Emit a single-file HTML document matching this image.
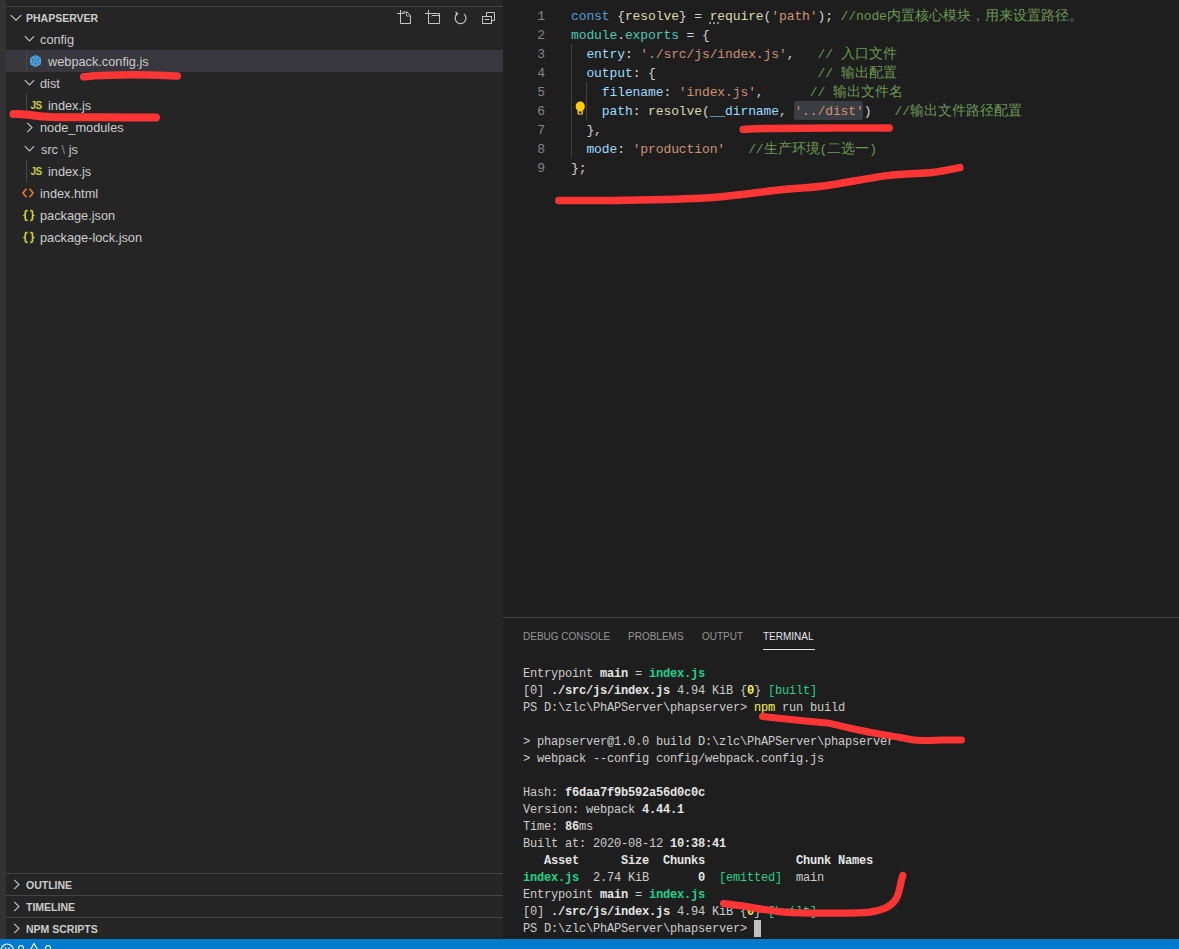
<!DOCTYPE html>
<html><head><meta charset="utf-8">
<style>
*{margin:0;padding:0;box-sizing:border-box}
html,body{width:1179px;height:949px;overflow:hidden;background:#1e1e1e}
body{position:relative;font-family:"Liberation Sans",sans-serif}
.abs{position:absolute}
#act{left:0;top:0;width:6px;height:939px;background:#333333}
#side{left:6px;top:0;width:497px;height:939px;background:#252526}
.hline{position:absolute;height:1px;background:#444446}
.row{position:absolute;left:0;width:497px;height:22px;line-height:22px;font-size:12.75px;color:#cccccc;white-space:nowrap}
.row .t{position:absolute;top:1px}
.sec{position:absolute;left:0;width:497px;height:22px;line-height:22px;font-size:10.5px;font-weight:700;color:#cccccc;white-space:nowrap}
.sec .t{position:absolute;left:20px;top:1px}
svg{position:absolute;overflow:visible}
#editor{left:503px;top:0;width:676px;height:617px;background:#1e1e1e}
.ln{position:absolute;left:0;width:42px;text-align:right;font-family:"Liberation Mono",monospace;font-size:13px;letter-spacing:-0.1px;color:#858585;height:19px;line-height:19px}
.code{position:absolute;left:68px;font-family:"Liberation Mono",monospace;font-size:13px;letter-spacing:-0.1px;color:#d4d4d4;height:19px;line-height:19px;white-space:pre}
.kw{color:#569cd6}.fn{color:#dcdcaa}.str{color:#ce9178}.cm{color:#6a9955}.prop{color:#9cdcfe}.cls{color:#4ec9b0}.br{color:#d4d4d4}.pk{color:#d4d4d4}.bl{color:#d4d4d4}.hl{}.cj{font-size:13.5px;letter-spacing:0}
#panel{left:503px;top:617px;width:676px;height:322px;background:#1e1e1e;border-top:1px solid #414141}
.tab{position:absolute;top:10px;font-size:10px;color:#969696;line-height:18px;white-space:nowrap}
.term{position:absolute;left:20px;font-family:"Liberation Mono",monospace;font-size:12px;letter-spacing:-0.2px;color:#cccccc;height:17px;line-height:17px;white-space:pre}
.b{font-weight:700;color:#e5e5e5}.g{color:#23d18b}.y{color:#f5f543}
#status{left:0;top:939px;width:1179px;height:10px;background:#007acc}
</style></head><body>
<div id="act" class="abs"></div>
<div id="side" class="abs">
  <div class="hline" style="left:0;top:6px;width:497px"></div>
  <div class="sec" style="top:7px;height:21px;line-height:21px"><svg style="left:4px;top:7px" width="12" height="8" viewBox="0 0 12 8"><path d="M0.8 1.2 L6 6.2 L11.2 1.2" fill="none" stroke="#c5c5c5" stroke-width="1.1"/></svg><span class="t">PHAPSERVER</span></div>
  <svg style="left:391px;top:10px" width="16" height="16" viewBox="0 0 16 16"><path d="M0 3.5 H7.5 M3.5 0 V7" stroke="#c5c5c5" stroke-width="1" fill="none"/><path d="M3.5 7 V13.5 H13.5 V5.5 L10 2 H5.5" fill="none" stroke="#c5c5c5" stroke-width="1"/><path d="M9.5 2 V6 H13.5" fill="none" stroke="#c5c5c5" stroke-width="0.8"/></svg>
  <svg style="left:419px;top:10px" width="16" height="16" viewBox="0 0 16 16"><path d="M0 3.5 H7 M3.5 0 V7" stroke="#c5c5c5" stroke-width="1" fill="none"/><path d="M3.5 7 V13.5 H14.5 V3.5 H7" fill="none" stroke="#c5c5c5" stroke-width="1"/><path d="M6 6.5 L7 5.5 H14.5" fill="none" stroke="#c5c5c5" stroke-width="1"/></svg>
  <svg style="left:448px;top:12px" width="14" height="14" viewBox="0 0 14 14"><path d="M9.9 1.9 A5.4 5.4 0 1 1 3.2 1.9" fill="none" stroke="#c5c5c5" stroke-width="1.2"/><path d="M1.6 0 L3.6 2 L1.4 3.6" fill="none" stroke="#c5c5c5" stroke-width="1.2"/></svg>
  <svg style="left:476px;top:12px" width="14" height="14" viewBox="0 0 14 14"><path d="M4.5 4.5 V0.5 H12.5 V8.5 H9.5" fill="none" stroke="#c5c5c5" stroke-width="1"/><rect x="0.5" y="4.5" width="9" height="7" fill="none" stroke="#c5c5c5" stroke-width="1"/><path d="M2.5 7.5 H7.5" stroke="#c5c5c5" stroke-width="1"/></svg>

  <div class="row" style="top:28px"><svg style="left:18px;top:7px" width="12" height="8" viewBox="0 0 12 8"><path d="M0.8 1.2 L5.5 5.9 L10.2 1.2" fill="none" stroke="#c5c5c5" stroke-width="1.1"/></svg><span class="t" style="left:34px">config</span></div>
  <div class="row" style="top:50px;background:#37373d"><div class="abs" style="left:20px;top:0;width:1px;height:22px;background:#484848"></div>
    <svg style="left:23px;top:4px" width="13" height="14" viewBox="0 0 13 14"><path d="M6.5 0.8 L12 3.8 V10.2 L6.5 13.2 L1 10.2 V3.8 Z" fill="#55a5da"/><path d="M6.5 3.6 L9.4 5.2 V8.6 L6.5 10.2 L3.6 8.6 V5.2 Z M6.5 6.8 V10.2 M3.6 5.2 L6.5 6.8 L9.4 5.2 M6.5 0.8 V3.6 M12 3.8 L9.4 5.2 M1 3.8 L3.6 5.2 M1 10.2 L3.6 8.6 M12 10.2 L9.4 8.6 M6.5 13.2 V10.2" fill="none" stroke="#2b6f9e" stroke-width="0.7"/></svg>
    <span class="t" style="left:42px">webpack.config.js</span></div>
  <div class="row" style="top:72px"><svg style="left:18px;top:7px" width="12" height="8" viewBox="0 0 12 8"><path d="M0.8 1.2 L5.5 5.9 L10.2 1.2" fill="none" stroke="#c5c5c5" stroke-width="1.1"/></svg><span class="t" style="left:34px">dist</span></div>
  <div class="row" style="top:94px"><div class="abs" style="left:20px;top:0;width:1px;height:22px;background:#484848"></div><span class="abs" style="left:24.5px;top:0.5px;font-size:10px;font-weight:700;color:#cbcb41;letter-spacing:-0.5px">JS</span><span class="t" style="left:42px">index.js</span></div>
  <div class="row" style="top:116px"><svg style="left:20px;top:6px" width="8" height="12" viewBox="0 0 8 12"><path d="M1.2 0.8 L6 5.5 L1.2 10.2" fill="none" stroke="#c5c5c5" stroke-width="1.1"/></svg><span class="t" style="left:34px">node_modules</span></div>
  <div class="row" style="top:138px"><svg style="left:18px;top:7px" width="12" height="8" viewBox="0 0 12 8"><path d="M0.8 1.2 L5.5 5.9 L10.2 1.2" fill="none" stroke="#c5c5c5" stroke-width="1.1"/></svg><span class="t" style="left:35px">src <span style="color:#8a8a8a">\</span> js</span></div>
  <div class="row" style="top:160px"><div class="abs" style="left:20px;top:0;width:1px;height:22px;background:#484848"></div><span class="abs" style="left:24.5px;top:0.5px;font-size:10px;font-weight:700;color:#cbcb41;letter-spacing:-0.5px">JS</span><span class="t" style="left:42px">index.js</span></div>
  <div class="row" style="top:182px"><svg style="left:16px;top:6px" width="12" height="10" viewBox="0 0 12 10"><path d="M4.5 0.8 L0.9 5 L4.5 9.2 M7.5 0.8 L11.1 5 L7.5 9.2" fill="none" stroke="#e37933" stroke-width="1.6"/></svg><span class="t" style="left:34px">index.html</span></div>
  <div class="row" style="top:204px"><svg style="left:16.5px;top:5.5px" width="12" height="11" viewBox="0 0 12 11"><path d="M4.6 0.7 H3.6 Q2.3 0.7 2.3 2 V4.2 Q2.3 5.1 1.5 5.5 Q2.3 5.9 2.3 6.8 V9 Q2.3 10.3 3.6 10.3 H4.6 M7.2 0.7 H8.2 Q9.5 0.7 9.5 2 V4.2 Q9.5 5.1 10.3 5.5 Q9.5 5.9 9.5 6.8 V9 Q9.5 10.3 8.2 10.3 H7.2" fill="none" stroke="#cbcb41" stroke-width="1.7"/></svg><span class="t" style="left:34px">package.json</span></div>
  <div class="row" style="top:226px"><svg style="left:16.5px;top:5.5px" width="12" height="11" viewBox="0 0 12 11"><path d="M4.6 0.7 H3.6 Q2.3 0.7 2.3 2 V4.2 Q2.3 5.1 1.5 5.5 Q2.3 5.9 2.3 6.8 V9 Q2.3 10.3 3.6 10.3 H4.6 M7.2 0.7 H8.2 Q9.5 0.7 9.5 2 V4.2 Q9.5 5.1 10.3 5.5 Q9.5 5.9 9.5 6.8 V9 Q9.5 10.3 8.2 10.3 H7.2" fill="none" stroke="#cbcb41" stroke-width="1.7"/></svg><span class="t" style="left:34px">package-lock.json</span></div>

  <div class="hline" style="left:0;top:873px;width:497px"></div>
  <div class="sec" style="top:874px;height:21px;line-height:21px"><svg style="left:7px;top:5px" width="8" height="12" viewBox="0 0 8 12"><path d="M1.2 0.8 L6 5.5 L1.2 10.2" fill="none" stroke="#c5c5c5" stroke-width="1.1"/></svg><span class="t">OUTLINE</span></div>
  <div class="hline" style="left:0;top:895px;width:497px"></div>
  <div class="sec" style="top:896px;height:21px;line-height:21px"><svg style="left:7px;top:5px" width="8" height="12" viewBox="0 0 8 12"><path d="M1.2 0.8 L6 5.5 L1.2 10.2" fill="none" stroke="#c5c5c5" stroke-width="1.1"/></svg><span class="t">TIMELINE</span></div>
  <div class="hline" style="left:0;top:917px;width:497px"></div>
  <div class="sec" style="top:918px;height:21px;line-height:21px"><svg style="left:7px;top:5px" width="8" height="12" viewBox="0 0 8 12"><path d="M1.2 0.8 L6 5.5 L1.2 10.2" fill="none" stroke="#c5c5c5" stroke-width="1.1"/></svg><span class="t">NPM SCRIPTS</span></div>
</div>
<div id="editor" class="abs">
  <div class="abs" style="left:291px;top:101px;width:69px;height:19px;background:#3a3d41;border-radius:3px"></div>
  <div class="ln" style="top:calc(6px + 1px)">1</div>
  <div class="code" style="top:calc(6px + 1px)"><span class="kw">const</span> <span class="br">{</span><span class="fn">resolve</span><span class="br">}</span> = <span class="fn">require</span><span class="br">(</span><span class="str">'path'</span><span class="br">)</span>; <span class="cm">//node<span class="cj">内置核心模块，用来设置路径。</span></span></div>
  <div class="ln" style="top:calc(25px + 1px)">2</div>
  <div class="code" style="top:calc(25px + 1px)"><span class="cls">module</span>.<span class="cls">exports</span> = <span class="br">{</span></div>
  <div class="ln" style="top:calc(44px + 1px)">3</div>
  <div class="code" style="top:calc(44px + 1px)">  <span class="prop">entry</span>: <span class="str">'./src/js/index.js'</span>,   <span class="cm">// <span class="cj">入口文件</span></span></div>
  <div class="ln" style="top:calc(63px + 1px)">4</div>
  <div class="code" style="top:calc(63px + 1px)">  <span class="prop">output</span>: <span class="pk">{</span>                     <span class="cm">// <span class="cj">输出配置</span></span></div>
  <div class="ln" style="top:calc(82px + 1px)">5</div>
  <div class="code" style="top:calc(82px + 1px)">    <span class="prop">filename</span>: <span class="str">'index.js'</span>,      <span class="cm">// <span class="cj">输出文件名</span></span></div>
  <div class="ln" style="top:calc(101px + 1px)">6</div>
  <div class="code" style="top:calc(101px + 1px)">    <span class="prop">path</span>: <span class="fn">resolve</span><span class="bl">(</span><span class="prop">__dirname</span>, <span class="str hl">'../dist'</span><span class="bl">)</span>   <span class="cm">//<span class="cj">输出文件路径配置</span></span></div>
  <div class="ln" style="top:calc(120px + 1px)">7</div>
  <div class="code" style="top:calc(120px + 1px)">  <span class="pk">}</span>,</div>
  <div class="ln" style="top:calc(139px + 1px)">8</div>
  <div class="code" style="top:calc(139px + 1px)">  <span class="prop">mode</span>: <span class="str">'production'</span>   <span class="cm">//<span class="cj">生产环境</span>(<span class="cj">二选一</span>)</span></div>
  <div class="ln" style="top:calc(158px + 1px)">9</div>
  <div class="code" style="top:calc(158px + 1px)"><span class="br">}</span>;</div>
  <div class="abs" style="left:206px;top:22px;width:12px;height:2px;background:repeating-linear-gradient(90deg,#8a8a8a 0 2px,transparent 2px 4px)"></div>
  <div class="abs" style="left:68px;top:44px;width:1px;height:114px;background:#404040"></div>
  <div class="abs" style="left:83px;top:82px;width:1px;height:38px;background:#404040"></div>
  <svg style="left:71.5px;top:101px" width="10.5" height="14" viewBox="0 0 12 14" preserveAspectRatio="none"><path d="M6 0.5 C2.8 0.5 0.8 2.8 0.8 5.4 C0.8 7.4 2.2 8.6 3 9.6 V13.5 H9 V9.6 C9.8 8.6 11.2 7.4 11.2 5.4 C11.2 2.8 9.2 0.5 6 0.5Z" fill="#ffcc00"/><rect x="4.5" y="10.5" width="3" height="2" fill="#1e1e1e"/></svg>
</div>
<div id="panel" class="abs">
  <div class="tab" style="left:20px">DEBUG CONSOLE</div>
  <div class="tab" style="left:125px">PROBLEMS</div>
  <div class="tab" style="left:199px">OUTPUT</div>
  <div class="tab" style="left:260px;color:#e7e7e7">TERMINAL</div>
  <div class="abs" style="left:260px;top:31px;width:52px;height:1px;background:#e7e7e7"></div>
  <div class="term" style="top:48px">Entrypoint <span class="b">main</span> = <span class="b g">index.js</span></div>
  <div class="term" style="top:65px">[0] <span class="b">./src/js/index.js</span> 4.94 KiB {<span class="b y">0</span>} <span class="g">[built]</span></div>
  <div class="term" style="top:82px">PS D:\zlc\PhAPServer\phapserver&gt; <span class="y">npm</span> run build</div>
  <div class="term" style="top:99px"></div>
  <div class="term" style="top:116px">&gt; phapserver@1.0.0 build D:\zlc\PhAPServer\phapserver</div>
  <div class="term" style="top:133px">&gt; webpack --config config/webpack.config.js</div>
  <div class="term" style="top:150px"></div>
  <div class="term" style="top:167px">Hash: <span class="b">f6daa7f9b592a56d0c0c</span></div>
  <div class="term" style="top:184px">Version: webpack <span class="b">4.44.1</span></div>
  <div class="term" style="top:201px">Time: <span class="b">86</span>ms</div>
  <div class="term" style="top:218px">Built at: 2020-08-12 <span class="b">10:38:41</span></div>
  <div class="term" style="top:235px"><span class="b">   Asset      Size  Chunks             Chunk Names</span></div>
  <div class="term" style="top:252px"><span class="b g">index.js</span>  2.74 KiB       <span class="b">0</span>  <span class="g">[emitted]</span>  main</div>
  <div class="term" style="top:269px">Entrypoint <span class="b">main</span> = <span class="b g">index.js</span></div>
  <div class="term" style="top:286px">[0] <span class="b">./src/js/index.js</span> 4.94 KiB {<span class="b y">0</span>} <span class="g">[built]</span></div>
  <div class="term" style="top:303px">PS D:\zlc\PhAPServer\phapserver&gt; </div>
  <div class="abs" style="left:251px;top:302px;width:7px;height:17px;background:#c0c0c0"></div>
</div>
<div id="status" class="abs" style="overflow:hidden"><svg style="left:0;top:0" width="80" height="10" viewBox="0 0 80 10"><circle cx="7.2" cy="11" r="6" fill="none" stroke="#ffffff" stroke-width="1.1"/><path d="M4.8 8.6 L9.6 13.4 M9.6 8.6 L4.8 13.4" stroke="#fff" stroke-width="1.1"/><ellipse cx="21" cy="10.5" rx="2.6" ry="4" fill="none" stroke="#fff" stroke-width="1.1"/><path d="M34 4.5 L28.5 14 H39.5 Z" fill="none" stroke="#fff" stroke-width="1.1"/><ellipse cx="48" cy="10.5" rx="2.6" ry="4" fill="none" stroke="#fff" stroke-width="1.1"/></svg></div>
<svg id="red" style="left:0;top:0;position:absolute" width="1179" height="949" viewBox="0 0 1179 949"><path d="M83.7 76.7 C86.8 76.5 93.3 75.7 102.0 75.4 C110.7 75.1 123.5 74.7 136.0 74.8 C148.5 74.9 170.4 75.7 177.3 75.9" fill="none" stroke="#fd3535" stroke-width="7.5" stroke-linecap="round" stroke-linejoin="round"/><path d="M13.5 114.1 C15.4 114.2 18.7 113.9 25.0 114.4 C31.3 114.9 38.2 116.5 51.0 117.0 C63.8 117.5 84.5 117.2 102.0 117.3 C119.5 117.4 147.0 117.5 156.0 117.6" fill="none" stroke="#fd3535" stroke-width="8" stroke-linecap="round" stroke-linejoin="round"/><path d="M743.2 129.4 C747.4 129.2 753.0 128.7 768.0 128.5 C783.0 128.3 812.8 128.1 833.0 128.0 C853.2 127.9 879.9 128.0 889.2 128.0" fill="none" stroke="#fd3535" stroke-width="7.5" stroke-linecap="round" stroke-linejoin="round"/><path d="M558.8 200.4 C568.1 200.4 590.1 200.8 615.0 200.4 C639.9 200.0 680.1 199.6 708.0 197.8 C735.9 196.0 763.2 191.5 782.5 189.5 C801.8 187.5 806.2 188.3 823.6 186.0 C841.0 183.7 868.9 177.9 887.0 175.6 C905.1 173.3 919.9 173.7 932.0 172.4 C944.1 171.1 955.2 168.4 959.8 167.6" fill="none" stroke="#fd3535" stroke-width="7.5" stroke-linecap="round" stroke-linejoin="round"/><path d="M762.5 716.4 C767.2 716.9 781.1 718.5 790.9 719.5 C800.7 720.5 814.9 721.8 821.4 722.4 C827.9 723.0 825.6 722.5 830.0 723.4 C834.4 724.3 841.0 726.2 848.0 727.7 C855.0 729.2 863.8 731.1 872.3 732.7 C880.8 734.3 891.3 735.9 898.8 737.2 C906.3 738.5 909.6 739.8 917.1 740.3 C924.6 740.8 936.2 740.1 943.6 740.0 C951.0 739.9 958.5 739.9 961.5 739.9" fill="none" stroke="#fd3535" stroke-width="7" stroke-linecap="round" stroke-linejoin="round"/><path d="M723.6 903.5 C727.4 904.0 736.5 905.1 746.6 906.6 C756.7 908.1 770.0 911.1 784.0 912.2 C798.0 913.3 816.6 913.2 830.6 913.2 C844.6 913.2 858.7 913.4 868.0 912.4 C877.3 911.4 881.9 909.7 886.6 907.5 C891.3 905.3 893.9 902.1 896.0 899.0 C898.1 895.9 898.6 892.2 899.5 889.0 C900.4 885.8 900.9 882.3 901.5 880.0 C902.1 877.7 902.7 876.2 902.9 875.4" fill="none" stroke="#fd3535" stroke-width="7.2" stroke-linecap="round" stroke-linejoin="round"/></svg>
</body></html>
